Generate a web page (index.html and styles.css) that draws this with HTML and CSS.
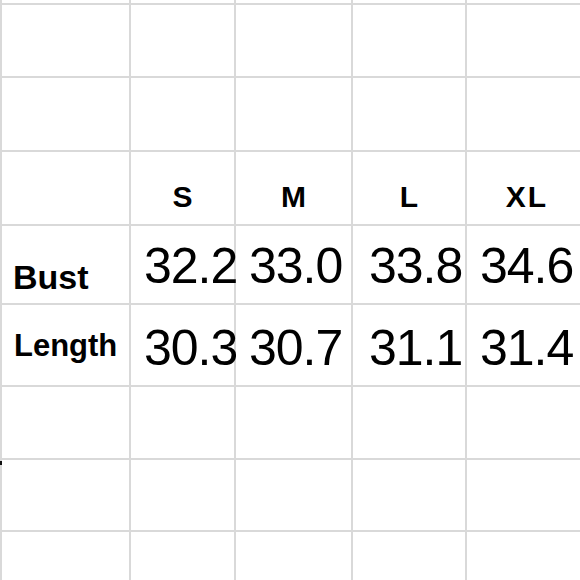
FILE: index.html
```html
<!DOCTYPE html>
<html>
<head>
<meta charset="utf-8">
<link rel="stylesheet" href="styles.css">
</head>
<body>
<div class="sheet">
  <div class="c"></div><div class="c"></div><div class="c"></div><div class="c"></div><div class="c"></div>
  <div class="c"></div><div class="c"></div><div class="c"></div><div class="c"></div><div class="c"></div>
  <div class="c"></div><div class="c"></div><div class="c"></div><div class="c"></div><div class="c"></div>
  <div class="c"></div><div class="c hd">S</div><div class="c hd">M</div><div class="c hd">L</div><div class="c hd xl">XL</div>
  <div class="c lbl bust">Bust</div><div class="c num r1">32.2</div><div class="c num r1">33.0</div><div class="c num r1 n3">33.8</div><div class="c num r1">34.6</div>
  <div class="c lbl len">Length</div><div class="c num r2">30.3</div><div class="c num r2">30.7</div><div class="c num r2 n3">31.1</div><div class="c num r2">31.4</div>
  <div class="c"></div><div class="c"></div><div class="c"></div><div class="c"></div><div class="c"></div>
  <div class="c"></div><div class="c"></div><div class="c"></div><div class="c"></div><div class="c"></div>
  <div class="c"></div><div class="c"></div><div class="c"></div><div class="c"></div><div class="c"></div>
</div>
<span class="tick"></span>
</body>
</html>
```
FILE: styles.css
```css
html, body {
  margin: 0;
  padding: 0;
  background: #fff;
  overflow: hidden;
  width: 580px;
  height: 580px;
}
body {
  position: relative;
  font-family: "Liberation Sans", Arial, sans-serif;
  color: #000;
}
.sheet {
  display: grid;
  width: 585px;
  grid-template-columns: 127px 103px 115px 112px 120px;
  grid-template-rows: 3px 71px 72px 72px 77px 80px 71px 70px 60px;
  column-gap: 2px;
  row-gap: 2px;
  padding-left: 2px;
  background: #d9d9d9;
}
.c {
  background: #fff;
  line-height: 1;
  white-space: nowrap;
}
.hd {
  font-weight: bold;
  font-size: 30px;
  text-align: center;
  padding-top: 30px;
}
.xl {
  letter-spacing: 2px;
}
.lbl {
  font-weight: bold;
}
.bust {
  font-size: 34px;
  padding-top: 34px;
  padding-left: 11px;
}
.len {
  font-size: 31px;
  padding-top: 25px;
  padding-left: 12px;
}
.num {
  font-size: 50px;
  letter-spacing: -1px;
  padding-left: 13px;
}
.n3 {
  padding-left: 16px;
}
.r1 {
  padding-top: 15px;
}
.r2 {
  padding-top: 18px;
}
.tick {
  position: absolute;
  left: 0;
  top: 461px;
  width: 2px;
  height: 4px;
  background: #111;
}
```
